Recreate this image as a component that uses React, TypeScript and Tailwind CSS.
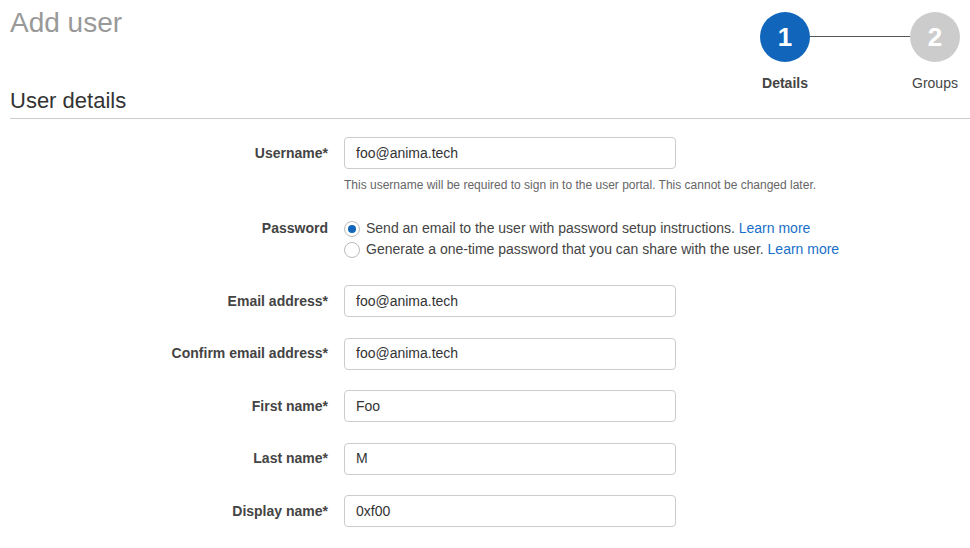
import React from "react";

const font = { fontFamily: '"Liberation Sans", Arial, sans-serif' };

function Field({ label, value }: { label: string; value: string }) {
  return (
    <div className="flex items-center">
      <div className="w-[318px] text-right text-[14px] font-bold text-[#444]">{label}</div>
      <div className="ml-[16px] flex h-[32px] w-[332px] items-center rounded-[4px] border border-[#ccc] px-[11px] text-[14px] text-[#333]">
        {value}
      </div>
    </div>
  );
}

function Radio({ checked }: { checked?: boolean }) {
  return (
    <span className="flex h-[16px] w-[16px] shrink-0 items-center justify-center rounded-full border border-[#bbb] bg-white">
      {checked && <span className="h-[8px] w-[8px] rounded-full bg-[#1166bb]" />}
    </span>
  );
}

export default function App() {
  return (
    <div style={font} className="min-h-[548px] w-[970px] bg-white pl-[10px]">
      <div className="flex h-[89px] items-start justify-between pr-[10px]">
        <div className="pt-[7px] text-[28px] leading-[32px] text-[#999]">Add user</div>
        <div className="flex shrink-0 pt-[12px]">
          <div className="flex w-[50px] shrink-0 flex-col items-center">
            <div className="flex h-[50px] w-[50px] shrink-0 items-center justify-center rounded-full bg-[#1166bb] text-[26px] font-bold text-white">
              1
            </div>
            <div className="mt-[13px] shrink-0 whitespace-nowrap text-[14px] font-bold leading-[16px] text-[#444]">Details</div>
          </div>
          <div className="mt-[24px] h-px w-[100px] shrink-0 bg-[#555]" />
          <div className="flex w-[50px] shrink-0 flex-col items-center">
            <div className="flex h-[50px] w-[50px] shrink-0 items-center justify-center rounded-full bg-[#ccc] text-[26px] font-bold text-white">
              2
            </div>
            <div className="mt-[13px] shrink-0 whitespace-nowrap text-[14px] leading-[16px] text-[#444]">Groups</div>
          </div>
        </div>
      </div>
      <div className="border-b border-[#ccc] pb-[5px] text-[22px] leading-[24px] text-[#333]">User details</div>

      <div className="mt-[18px]">
        <Field label="Username*" value="foo@anima.tech" />
        <div className="ml-[334px] mt-[9px] text-[12px] leading-[15px] text-[#666]">
          This username will be required to sign in to the user portal. This cannot be changed later.
        </div>

        <div className="mt-[25px] flex">
          <div className="w-[318px] text-right text-[14px] font-bold leading-[21px] text-[#444]">Password</div>
          <div className="ml-[16px] flex flex-col text-[14px] leading-[21px] text-[#444]">
            <div className="flex items-center gap-[6px]">
              <Radio checked />
              <span>
                Send an email to the user with password setup instructions.{" "}
                <span className="text-[#1a6fc9]">Learn more</span>
              </span>
            </div>
            <div className="flex items-center gap-[6px]">
              <Radio />
              <span>
                Generate a one-time password that you can share with the user.{" "}
                <span className="text-[#1a6fc9]">Learn more</span>
              </span>
            </div>
          </div>
        </div>

        <div className="mt-[25px] flex flex-col gap-[20.5px]">
          <Field label="Email address*" value="foo@anima.tech" />
          <Field label="Confirm email address*" value="foo@anima.tech" />
          <Field label="First name*" value="Foo" />
          <Field label="Last name*" value="M" />
          <Field label="Display name*" value="0xf00" />
        </div>
      </div>
    </div>
  );
}
